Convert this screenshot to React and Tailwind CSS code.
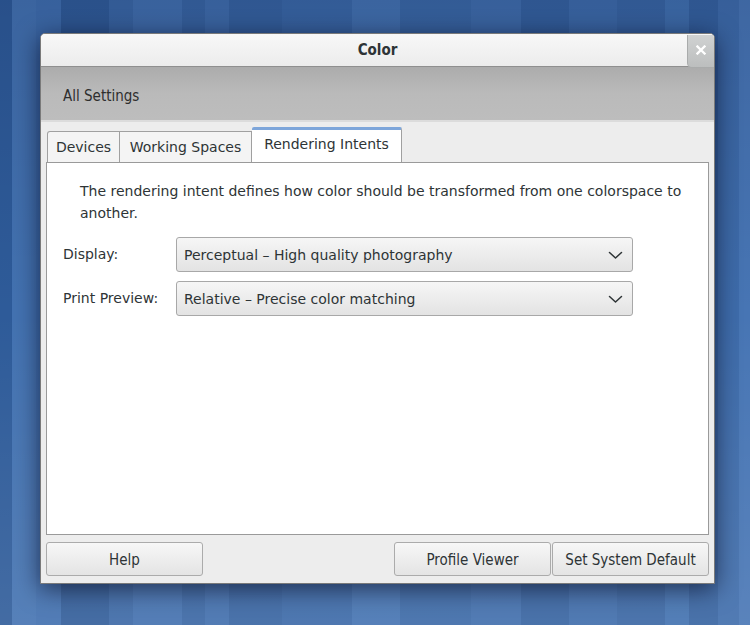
import React from "react";

const stripes = [
  [12, "#2e5b99"], [24, "#4372b1"], [25, "#3f6eae"], [48, "#305c99"], [24, "#3a67a5"],
  [49, "#416fae"], [23, "#3865a3"], [24, "#3f6dac"], [53, "#3663a1"], [70, "#3a68a7"],
  [48, "#4372b1"], [71, "#3a68a6"], [50, "#3f6dac"], [48, "#3562a0"], [48, "#3d6baa"],
  [48, "#3865a3"], [24, "#4070af"], [29, "#3562a0"], [21, "#3e6cab"], [11, "#4775b4"],
];

const condensed = { fontFamily: '"DejaVu Sans Condensed", "DejaVu Sans", sans-serif', fontStretch: "condensed" };

function Chevron() {
  return (
    <svg width="15" height="9" viewBox="0 0 15 9" className="shrink-0">
      <path d="M1.5 1.5 L7.5 7 L13.5 1.5" fill="none" stroke="#2e3436" strokeWidth="1.5" strokeLinecap="round" strokeLinejoin="round" />
    </svg>
  );
}

function Combo({ text }) {
  return (
    <div className="flex-1 h-[35px] flex items-center justify-between pl-[7px] pr-[9px] pt-[1px] rounded-[3px] border border-[#a8a8a8] bg-gradient-to-b from-[#f6f6f6] to-[#e3e3e3] text-[#2e3436]">
      <span>{text}</span>
      <Chevron />
    </div>
  );
}

function Button({ children, className = "" }) {
  return (
    <div className={"h-[34px] pt-[3px] flex items-center justify-center rounded-[3px] border border-[#ababab] bg-gradient-to-b from-[#f7f7f7] to-[#e4e4e4] text-[#2e3436] " + className}>
      {children}
    </div>
  );
}

export default function App() {
  return (
    <div className="relative w-[750px] h-[625px] overflow-hidden" style={{ fontFamily: '"DejaVu Sans", sans-serif' }}>
      <div className="flex h-full">
        {stripes.map(([w, c], i) => (
          <div key={i} className="h-full shrink-0" style={{ width: w, background: c }} />
        ))}
      </div>
      <div className="absolute inset-0 bg-gradient-to-b from-[rgba(0,0,30,0.12)] via-transparent to-[rgba(255,255,255,0.1)]" />

      {/* window */}
      <div className="absolute left-[40px] top-[33px] w-[675px] h-[551px] flex flex-col bg-[#ededed] rounded-t-[5px] border border-[#7a7a7a] shadow-[0_5px_24px_rgba(0,0,20,0.6)] overflow-hidden">
        {/* title bar */}
        <div className="relative h-[33px] shrink-0 flex items-center justify-center bg-gradient-to-b from-[#f8f8f8] to-[#ececec] border-b border-[#8f8f8f]">
          <span className="font-bold text-[15px] text-[#2e3436]" style={condensed}>Color</span>
          <div className="absolute right-0 top-[1px] w-[27px] h-[33px] rounded-bl-[5px] bg-gradient-to-b from-[#d0d2d2] to-[#bcbebe] border-l border-b border-[#a9abab] flex items-center justify-center pb-[2px]">
            <svg width="10" height="10" viewBox="0 0 10 10"><path d="M1.5 1.5 L8.5 8.5 M8.5 1.5 L1.5 8.5" stroke="#ffffff" strokeWidth="2.3" strokeLinecap="square" /></svg>
          </div>
        </div>
        {/* header */}
        <div className="h-[55px] shrink-0 flex items-center pl-[22px] pt-[5px] bg-gradient-to-b from-[#acacac] via-[#bababa] to-[#bdbdbd] border-b-[2px] border-[#dcdcdc] text-[15px] text-[#2e2e2e]" style={condensed}>
          All Settings
        </div>

        {/* content */}
        <div className="flex-1 flex flex-col px-[5px] pt-[5px] pb-[7px] text-[14px]">
          {/* tabs */}
          <div className="flex items-end h-[35px] pl-[1px] shrink-0">
            <div className="h-[31px] w-[73px] flex items-center justify-center border border-b-0 border-[#a0a0a0] rounded-tl-[3px] bg-[#f4f4f4] text-[#2e3436]">Devices</div>
            <div className="h-[31px] w-[132px] flex items-center justify-center border border-b-0 border-l-0 border-[#a0a0a0] bg-[#f4f4f4] text-[#2e3436]">Working Spaces</div>
            <div className="h-[35px] w-[150px] pb-[3px] flex items-center justify-center border border-b-0 border-l-0 border-[#a0a0a0] border-t-[3px] border-t-[#7ea6da] bg-white text-[#2e3436] rounded-t-[2px]">Rendering Intents</div>
          </div>
          {/* notebook page */}
          <div className="flex-1 bg-white border border-[#9a9a9a] flex flex-col pt-[17px] px-[16px] text-[#2e3436]">
            <p className="pl-[17px] leading-[22px]">
              <span className="whitespace-nowrap">The rendering intent defines how color should be transformed from one colorspace to</span>
              <br />
              another.
            </p>
            <div className="flex items-center mt-[13px]">
              <span className="w-[113px] shrink-0">Display:</span>
              <div className="flex-1 pr-[59px] flex"><Combo text="Perceptual – High quality photography" /></div>
            </div>
            <div className="flex items-center mt-[9px]">
              <span className="w-[113px] shrink-0">Print Preview:</span>
              <div className="flex-1 pr-[59px] flex"><Combo text="Relative – Precise color matching" /></div>
            </div>
          </div>
          {/* buttons */}
          <div className="flex mt-[7px] shrink-0 text-[15px]" style={condensed}>
            <Button className="w-[157px]">Help</Button>
            <div className="flex-1" />
            <Button className="w-[157px]">Profile Viewer</Button>
            <Button className="w-[157px] ml-[1px]">Set System Default</Button>
          </div>
        </div>
      </div>
    </div>
  );
}
